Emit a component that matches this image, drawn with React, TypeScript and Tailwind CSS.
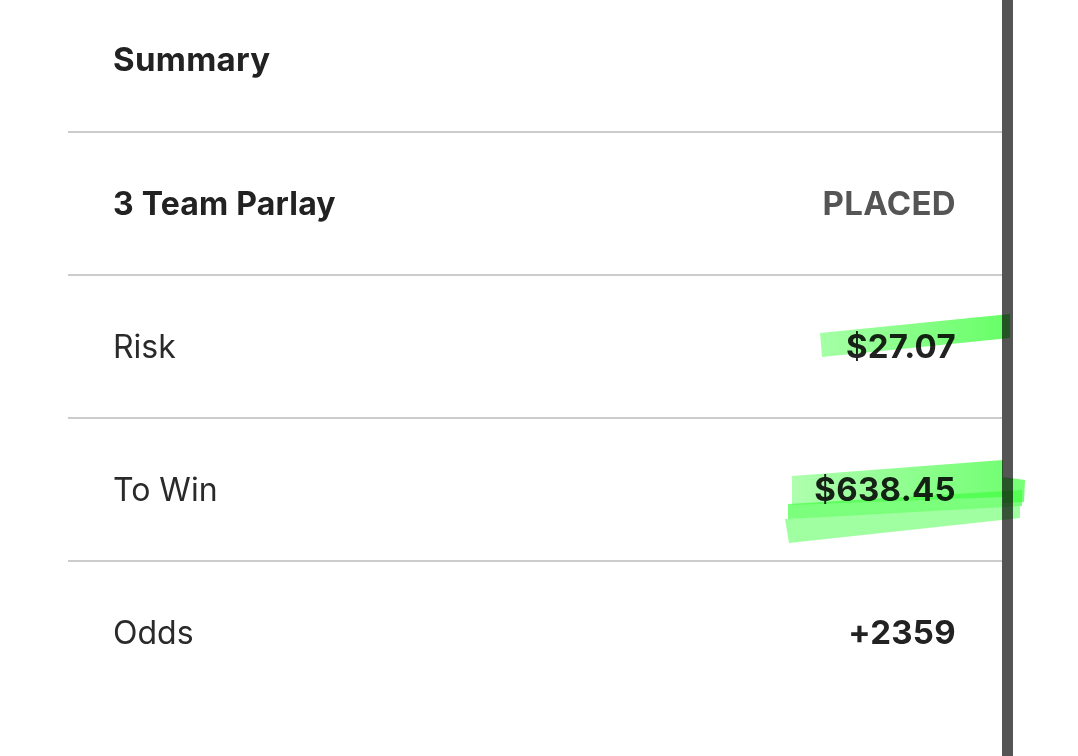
import React from "react";

const font = { fontFamily: "Inter, 'Noto Sans', sans-serif" };

function Row({ label, value, bold, valueClass }: { label: string; value: string; bold?: boolean; valueClass?: string }) {
  return (
    <div className="flex h-[143px] items-center justify-between border-t-2 border-[#cccccc] pl-[45px] pr-[46px]">
      <span className={bold ? "text-[32px] font-bold tracking-[0.2px] text-[#222]" : "text-[32px] font-normal text-[#2a2a2a]"}>{label}</span>
      <span className={valueClass ?? "text-[33px] font-bold tracking-[0.3px] text-[#222]"}>{value}</span>
    </div>
  );
}

export default function App() {
  return (
    <div className="relative flex h-[756px] w-[1078px] overflow-hidden bg-white" style={font}>
      <div className="ml-[68px] flex w-[934px] flex-col">
        <div className="flex h-[131px] items-center pb-[12px] pl-[45px]">
          <span className="text-[33px] font-bold tracking-[0.3px] text-[#222]">Summary</span>
        </div>
        <Row label="3 Team Parlay" value="PLACED" bold valueClass="text-[33px] font-bold tracking-[0.3px] text-[#555]" />
        <Row label="Risk" value="$27.07" />
        <Row label="To Win" value="$638.45" />
        <Row label="Odds" value="+2359" />
      </div>
      <div className="h-full w-[11px] bg-[#555555]" />
      <svg className="pointer-events-none absolute left-0 top-0 mix-blend-multiply" width="1078" height="756">
        <defs>
          <linearGradient id="g1" x1="0" x2="1" y1="0" y2="0">
            <stop offset="0" stopColor="#a6ffa6" />
            <stop offset="1" stopColor="#66ff66" />
          </linearGradient>
        </defs>
        <polygon points="820,333 1010,314 1010,338 822,357" fill="url(#g1)" />
        <polygon points="792,476 1003,460 1003,497 792,505" fill="url(#g1)" opacity="0.9" />
        <polygon points="1003,477 1025,480 1024,502 1003,503" fill="#55ff55" opacity="0.8" />
        <polygon points="788,504 1022,490 1022,506 788,519" fill="#44ff44" opacity="0.7" />
        <polygon points="785,519 1020,502 1020,518 789,543" fill="#77ff77" opacity="0.7" />
      </svg>
    </div>
  );
}
